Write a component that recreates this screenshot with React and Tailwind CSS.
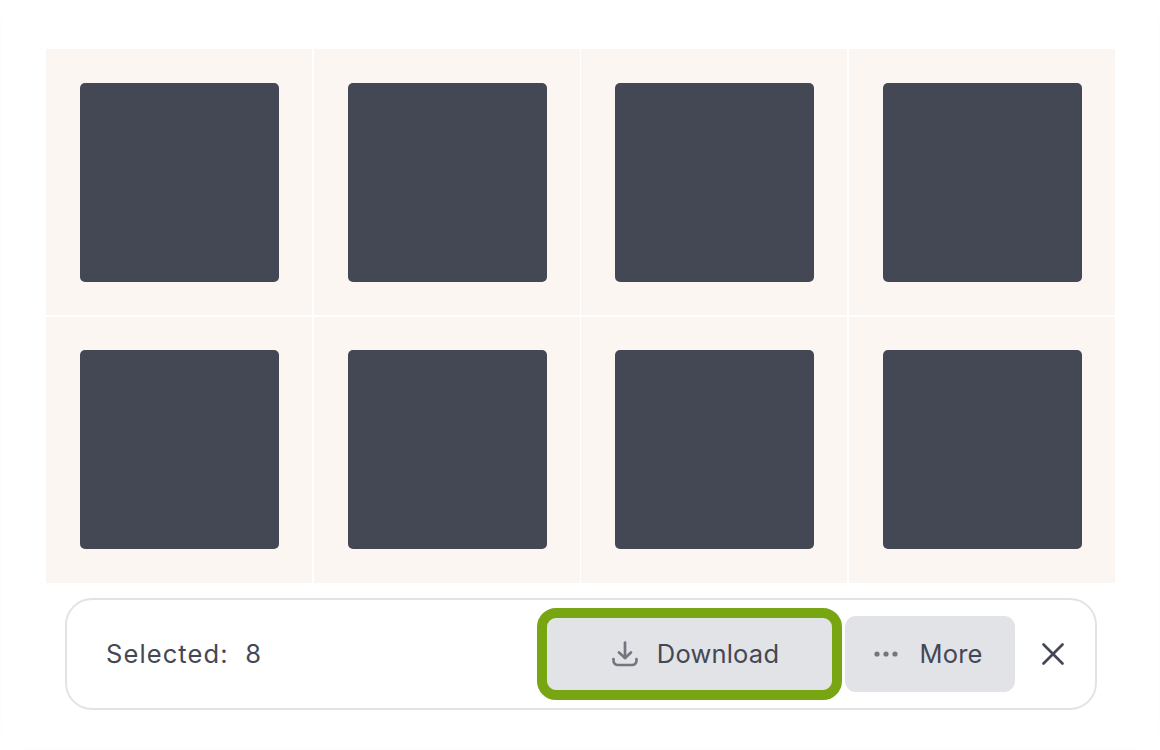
import React from "react";

const Cell = () => (
  <div className="bg-[#fcf6f3] pb-[33.6px] pl-[34px] pr-[33.33px] pt-[33.7px]">
    <div className="h-[199px] rounded-[5px] bg-[#444854]" />
  </div>
);

export default function App() {
  return (
    <div className="h-[750px] w-[1160px] overflow-hidden bg-white" style={{ fontFamily: "Inter, 'Noto Sans', sans-serif" }}>
      <div className="flex h-full flex-col rounded-[27px] border border-[#fdfdfd] pl-[45px] pr-[44px] pt-[48px]">
        <div className="grid grid-cols-4 gap-[1.33px]">
          {Array.from({ length: 8 }).map((_, i) => (
            <Cell key={i} />
          ))}
        </div>
        <div className="ml-[19px] mr-[18px] mt-[15px] flex h-[112px] items-center rounded-[27px] border-2 border-[#e2e3e7] pl-[39px] pr-[26px] text-[#444854]">
          <span className="flex-1 text-[25.5px] font-normal tracking-[1.1px] whitespace-pre">Selected:  8</span>
          <button className="flex h-[72px] w-[285px] items-center justify-center gap-[16px] rounded-[9px] bg-[#e2e3e7] pl-[9px] text-[25.5px] tracking-[0.2px] outline-[10px] outline-[#78a512]">
            <svg width="32" height="32" viewBox="0 0 32 32" fill="none" stroke="#73767e" strokeWidth="2.7" strokeLinecap="round" strokeLinejoin="round">
              <path d="M16 4.5v15.5" />
              <path d="M10 14.5l6 5.5 6-5.5" />
              <path d="M4.5 21v1.5a4.5 4.5 0 0 0 4.5 4.5h14a4.5 4.5 0 0 0 4.5-4.5V21" />
            </svg>
            Download
          </button>
          <button className="ml-[13px] flex h-[76px] w-[170px] items-center justify-center gap-[20px] rounded-[11px] bg-[#e2e3e7] pr-[4px] text-[25.5px] tracking-[0.2px]">
            <svg width="26" height="8" viewBox="0 0 26 8" fill="#73767e">
              <circle cx="4" cy="4" r="2.6" />
              <circle cx="13" cy="4" r="2.6" />
              <circle cx="22" cy="4" r="2.6" />
            </svg>
            More
          </button>
          <button className="ml-[22px] flex h-[32px] w-[32px] items-center justify-center">
            <svg width="32" height="32" viewBox="0 0 32 32" fill="none" stroke="#444854" strokeWidth="2.7" strokeLinecap="round">
              <path d="M6.5 6.5l19 19" />
              <path d="M25.5 6.5l-19 19" />
            </svg>
          </button>
        </div>
      </div>
    </div>
  );
}
